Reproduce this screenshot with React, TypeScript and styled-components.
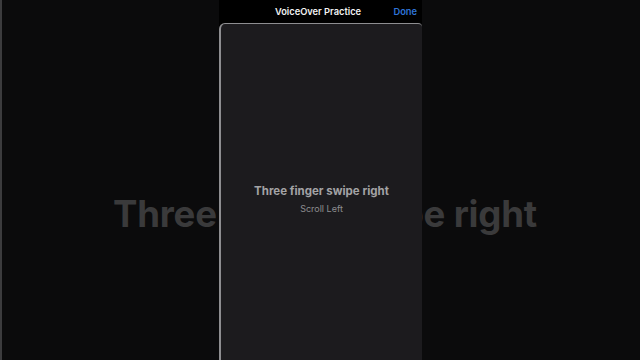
import styled, { createGlobalStyle } from "styled-components";

const Global = createGlobalStyle`
  html, body {
    margin: 0;
    padding: 0;
    background: #0b0b0c;
  }
  body {
    font-family: Inter, "Liberation Sans", sans-serif;
  }
`;

const Stage = styled.main`
  width: 640px;
  height: 360px;
  display: grid;
  background: #0b0b0c;
  border-left: 2px solid #3c3c3e;
  box-sizing: border-box;
  overflow: hidden;
`;

// blown-up copy of the gesture label behind the phone
const Backdrop = styled.div`
  grid-area: 1 / 1;
  display: flex;
  align-items: center;
  justify-content: center;
  padding: 67px 0 0 8px;
`;

const BigText = styled.div`
  font-size: 36.6px;
  font-weight: 700;
  color: #3a3a3b;
  letter-spacing: -0.2px;
  white-space: nowrap;
`;

const Phone = styled.section`
  grid-area: 1 / 1;
  justify-self: center;
  width: 203px;
  margin-left: -1px;
  display: flex;
  flex-direction: column;
  background: #000;
`;

const NavBar = styled.header`
  height: 23px;
  display: grid;
  grid-template-columns: 1fr auto 1fr;
  align-items: center;
  padding: 0 5px 0 0;
`;

const NavTitle = styled.span`
  grid-column: 2;
  font-size: 9.3px;
  font-weight: 600;
  color: #f2f2f2;
`;

const NavButton = styled.span`
  justify-self: end;
  font-size: 9.3px;
  font-weight: 600;
  color: #2f74d8;
`;

const Card = styled.div`
  flex: 1;
  display: flex;
  flex-direction: column;
  align-items: center;
  justify-content: center;
  gap: 5px;
  background: #1c1b1e;
  border-top: 1.5px solid #8e8e91;
  border-left: 2px solid #8e8e91;
  border-top-left-radius: 6px;
  border-top-right-radius: 4px;
  padding-top: 13px;
`;

const Gesture = styled.div`
  font-size: 11.5px;
  font-weight: 700;
  color: #a3a3a5;
`;

const Action = styled.div`
  font-size: 9px;
  color: #8d8d90;
`;

const App = () => {
  return (
    <>
      <Global />
      <Stage>
        <Backdrop>
          <BigText>Three finger swipe right</BigText>
        </Backdrop>
        <Phone>
          <NavBar>
            <NavTitle>VoiceOver Practice</NavTitle>
            <NavButton>Done</NavButton>
          </NavBar>
          <Card>
            <Gesture>Three finger swipe right</Gesture>
            <Action>Scroll Left</Action>
          </Card>
        </Phone>
      </Stage>
    </>
  );
};

export default App;
